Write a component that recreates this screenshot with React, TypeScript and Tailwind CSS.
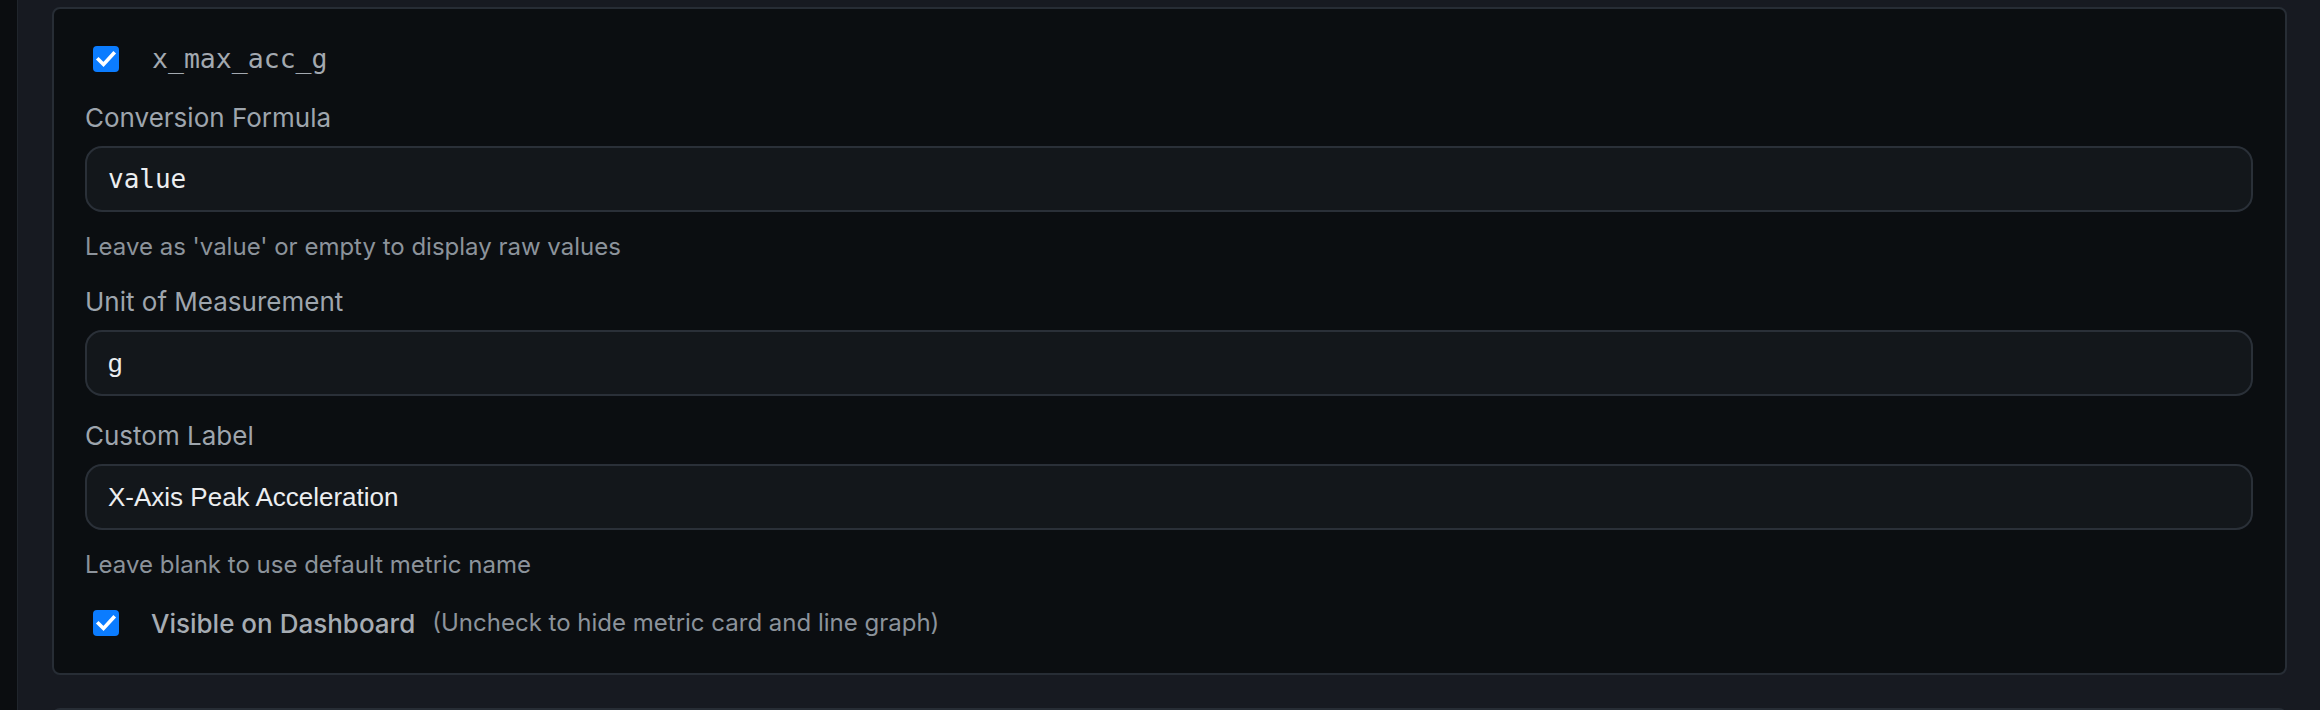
import { useState } from "react";

const sans = "font-['Inter','Noto_Sans',sans-serif]";
const mono = "font-['DejaVu_Sans_Mono','Liberation_Mono',monospace]";
const arial = "font-['Liberation_Sans','Arial',sans-serif]";

/* Blue checked box, drawn rather than native so it keeps its size */
function Check({ checked, onToggle }: { checked: boolean; onToggle: () => void }) {
  return (
    <button
      onClick={onToggle}
      className={`w-[26px] h-[26px] rounded-[4px] flex items-center justify-center shrink-0 ${
        checked ? "bg-[#0b7cff]" : "bg-[#0b0e11] border-2 border-[#4b525b]"
      }`}
    >
      {checked && (
        <svg width="26" height="26" viewBox="0 0 26 26">
          <path
            d="M5.5 13.5 L10.5 18.5 L20.5 7.5"
            fill="none"
            stroke="white"
            strokeWidth="3.6"
            strokeLinecap="square"
          />
        </svg>
      )}
    </button>
  );
}

function Label({ children, className = "" }: any) {
  return (
    <div className={`${sans} text-[26px] leading-[36px] text-[#9ea5ad] ${className}`}>
      {children}
    </div>
  );
}

function Help({ children }: any) {
  return (
    <div className={`${sans} text-[24px] leading-[30px] text-[#8c939b] mt-[20px]`}>
      {children}
    </div>
  );
}

const inputBase = `
  w-full h-[66px] rounded-[17px] px-[21px]
  bg-[#13171b] border-2 border-[#2a3038]
  text-[#eceef0] outline-none
`;

export default function App() {
  const [enabled, setEnabled] = useState(true);
  const [visible, setVisible] = useState(true);
  const [form, setForm] = useState({
    formula: "value",
    unit: "g",
    label: "X-Axis Peak Acceleration",
  });

  function updateField(field: string, value: string) {
    setForm((prev) => ({ ...prev, [field]: value }));
  }

  return (
    <div className="h-[710px] w-full overflow-hidden flex bg-[#171a21]">
      {/* side rail */}
      <div className="w-[18px] shrink-0 bg-[#0b0d10] border-r border-[#20252c]" />

      <div className="flex-1 pl-[34px] pr-[33px] pt-[7px]">
        {/* metric card */}
        <div className="bg-[#0b0e11] border-2 border-[#272d35] rounded-[8px] pl-[31px] pr-[32px] pt-[37px] pb-[37px]">
          <div className="flex items-center h-[26px] pl-[8px]">
            <Check checked={enabled} onToggle={() => setEnabled(!enabled)} />
            <span className={`${mono} text-[26.5px] text-[#a3a9b0] ml-[33px] leading-none`}>
              x_max_acc_g
            </span>
          </div>

          {/* FORMULA */}
          <Label className="mt-[28px]">Conversion Formula</Label>
          <input
            value={form.formula}
            onChange={(e) => updateField("formula", e.target.value)}
            className={`${inputBase} ${mono} text-[26px] mt-[10px]`}
          />
          <Help>Leave as 'value' or empty to display raw values</Help>

          {/* UNIT */}
          <Label className="mt-[22px]">Unit of Measurement</Label>
          <input
            value={form.unit}
            onChange={(e) => updateField("unit", e.target.value)}
            className={`${inputBase} ${arial} text-[26px] mt-[10px]`}
          />

          {/* LABEL */}
          <Label className="mt-[22px]">Custom Label</Label>
          <input
            value={form.label}
            onChange={(e) => updateField("label", e.target.value)}
            className={`${inputBase} ${arial} text-[26px] mt-[10px]`}
          />
          <Help>Leave blank to use default metric name</Help>

          {/* VISIBILITY */}
          <div className="flex items-center h-[26px] pl-[8px] mt-[30px]">
            <Check checked={visible} onToggle={() => setVisible(!visible)} />
            <span className={`${sans} text-[26px] font-medium text-[#a6acb3] ml-[32px]`}>
              Visible on Dashboard
            </span>
            <span className={`${sans} text-[24px] text-[#8c939b] ml-[17px]`}>
              (Uncheck to hide metric card and line graph)
            </span>
          </div>
        </div>

        {/* next card, cut off by the fold */}
        <div className="mt-[33px] h-[60px] bg-[#0b0e11] border-2 border-[#272d35] rounded-[8px]" />
      </div>
    </div>
  );
}
